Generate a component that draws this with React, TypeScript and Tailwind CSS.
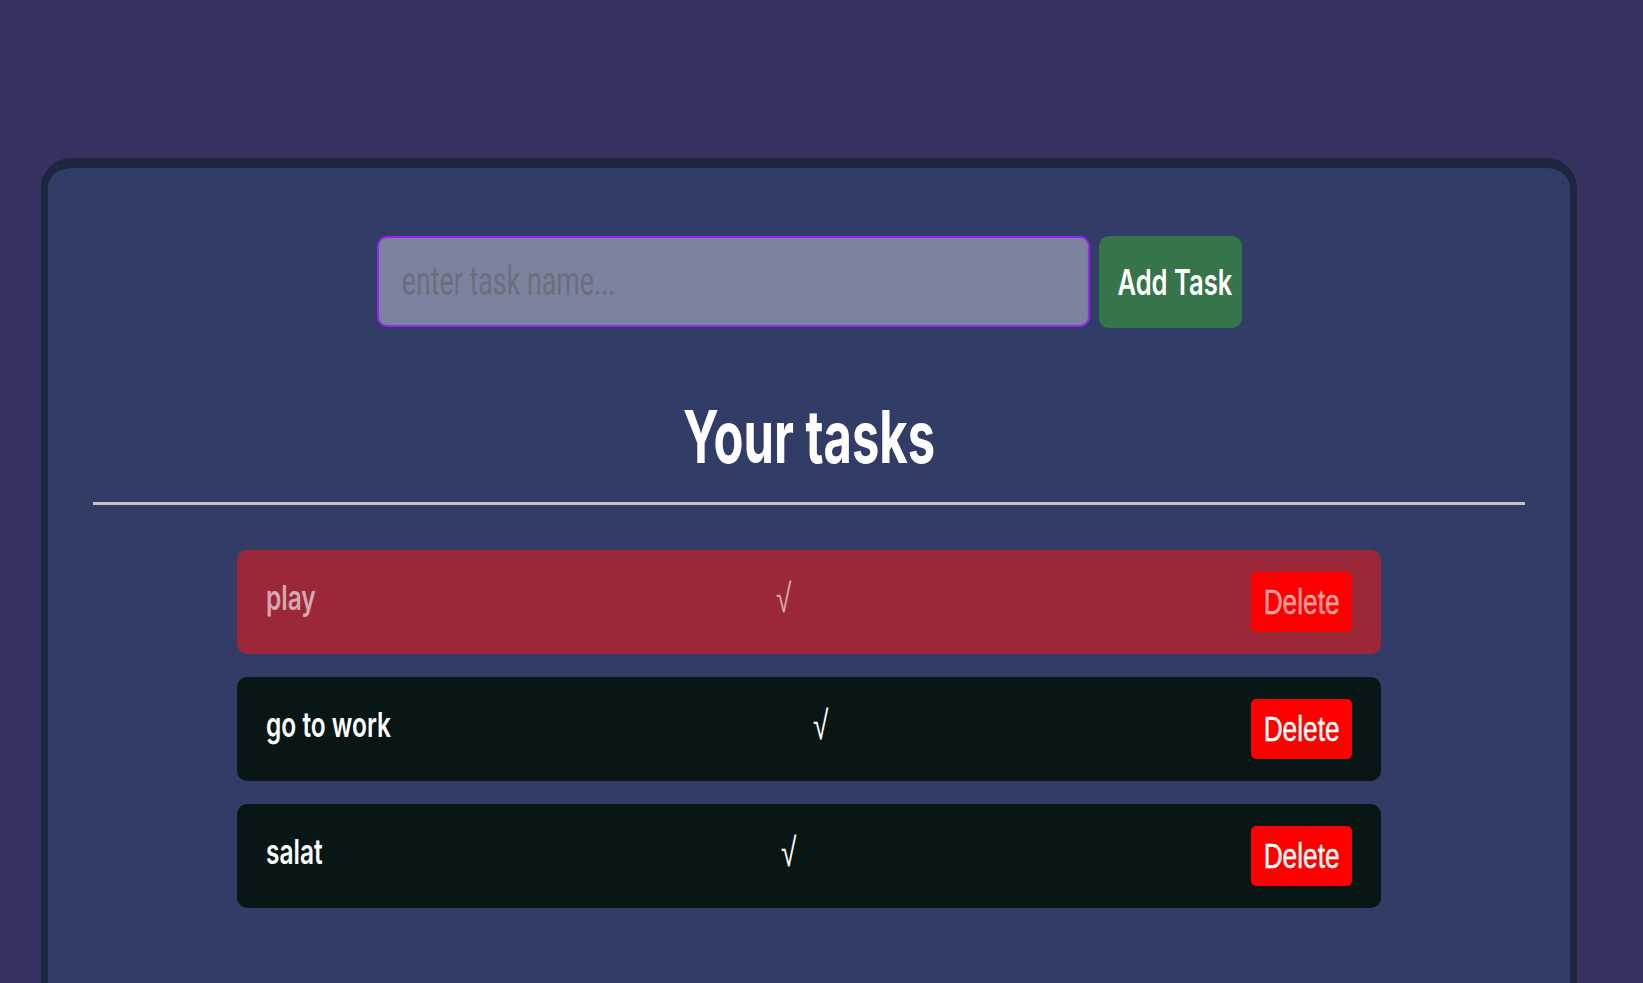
const tasks = [
  { name: "play", done: true, w: "w-[52px]" },
  { name: "go to work", done: false, w: "w-[126px]" },
  { name: "salat", done: false, w: "w-[61px]" },
];

function TaskRow({ name, done, w }: { name: string; done: boolean; w: string }) {
  return (
    <div
      className={
        done
          ? "flex h-[104px] items-center justify-between rounded-[10px] bg-[#9b2739] px-[29px] text-white/60"
          : "flex h-[104px] items-center justify-between rounded-[10px] bg-[#091616] px-[29px] text-white"
      }
    >
      <span className={`${w} mb-[10px] shrink-0`}>
        <span className="inline-block origin-left scale-x-[0.72] whitespace-nowrap text-[34px] font-semibold">
          {name}
        </span>
      </span>
      <span className="mb-[8px] w-[17px] shrink-0">
        <span className="inline-block origin-left scale-x-[0.7] font-['Liberation_Sans',sans-serif] text-[40px] leading-none">
          √
        </span>
      </span>
      <button className="flex h-[60px] w-[101px] shrink-0 items-center justify-center rounded-[5px] bg-[#ff0000]">
        <span className="inline-block scale-x-[0.75] font-['Liberation_Sans',sans-serif] text-[35px] [-webkit-text-stroke:0.4px_currentColor]">
          Delete
        </span>
      </button>
    </div>
  );
}

export default function App() {
  return (
    <div className="h-screen overflow-hidden bg-[#353160] pl-[41px] pt-[158px] font-['Inter',sans-serif]">
      <div className="w-[1536px] rounded-t-[30px] border-x-[7px] border-t-[10px] border-[#1e2541] bg-[#323d67] pb-[120px] pt-[68px]">
        <div className="flex justify-center gap-[9px]">
          <div className="h-[91px] w-[713px]">
            <input
              placeholder="enter task name..."
              className="h-full w-[1064px] origin-left scale-x-[0.67] rounded-[15px/10px] border-x-[3px] border-y-2 border-[#9a22f5] bg-[#7b839f] pl-[34px] font-['Roboto',sans-serif] text-[40px] text-white outline-none placeholder:text-[#6c6e7c]"
            />
          </div>
          <button className="flex h-[92px] w-[143px] items-center justify-center rounded-[10px] bg-[#367549] pl-[10px] text-white">
            <span className="inline-block scale-x-[0.71] whitespace-nowrap text-[36px] font-semibold">
              Add Task
            </span>
          </button>
        </div>

        <div className="mt-[72px] flex justify-center">
          <h1 className="inline-block scale-x-[0.67] whitespace-nowrap text-[73px] font-bold leading-none text-white">
            Your tasks
          </h1>
        </div>

        <div className="mx-[45px] mt-[29px] h-[3px] bg-[#c4c4c4]" />

        <div className="mx-auto mt-[45px] flex w-[1144px] flex-col gap-[23px]">
          {tasks.map((t) => (
            <TaskRow key={t.name} {...t} />
          ))}
        </div>
      </div>
    </div>
  );
}
